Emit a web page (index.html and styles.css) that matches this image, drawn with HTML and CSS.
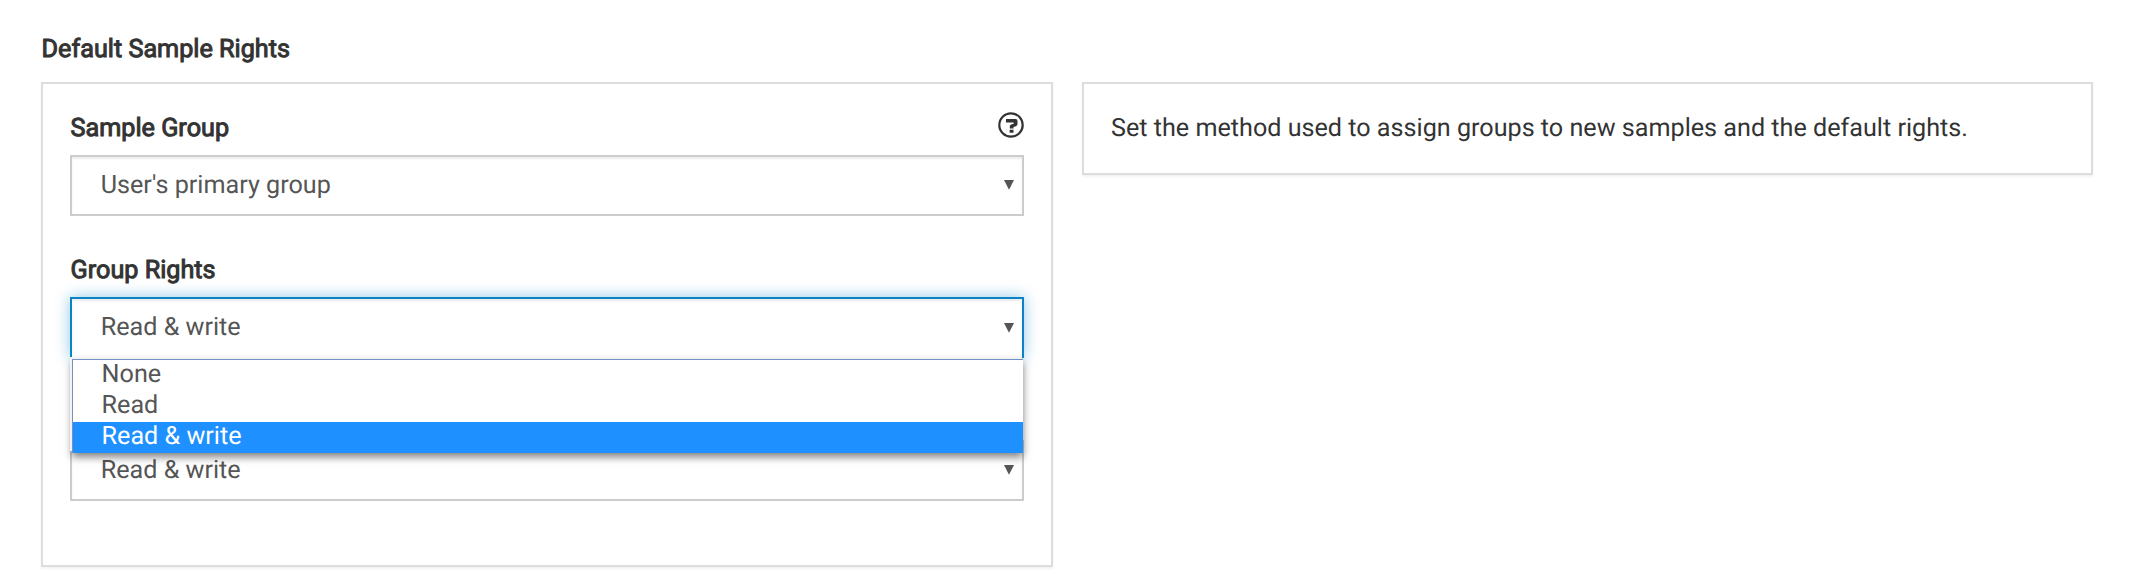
FILE: index.html
```html
<!DOCTYPE html>
<html lang="en">
<head>
<meta charset="utf-8">
<title>Default Sample Rights</title>
<link rel="stylesheet" href="styles.css">
</head>
<body>
<h2 class="title">Default Sample Rights</h2>
<main class="columns">
  <section class="panel form">
    <div class="field">
      <div class="label-row">
        <span class="label">Sample Group</span>
        <svg class="help" viewBox="0 0 26 26" aria-label="Help"><circle cx="13" cy="13" r="11.7" fill="none" stroke="#333" stroke-width="2.2"/><path d="M8 7h9.5q2 0 2 2v3q0 1.6-1.5 2.2l-2.5.9v1.5h-3.7v-2.3q0-1.2 1.3-1.7l2.6-.9v-1.2H8zM11.6 17.8h3.9v3h-3.9z" fill="#333"/></svg>
      </div>
      <div class="select"><span>User's primary group</span><svg class="arrow" viewBox="0 0 10 10"><path d="M0 0h10L5 9.8z"/></svg></div>
    </div>
    <div class="field">
      <div class="label-row"><span class="label">Group Rights</span></div>
      <div class="select focused"><span>Read &amp; write</span><svg class="arrow" viewBox="0 0 10 10"><path d="M0 0h10L5 9.8z"/></svg>
        <div class="menu">
          <div class="option">None</div>
          <div class="option">Read</div>
          <div class="option selected">Read &amp; write</div>
        </div>
      </div>
    </div>
    <div class="field last">
      <div class="select"><span>Read &amp; write</span><svg class="arrow" viewBox="0 0 10 10"><path d="M0 0h10L5 9.8z"/></svg></div>
    </div>
  </section>
  <aside class="panel note">Set the method used to assign groups to new samples and the default rights.</aside>
</main>
</body>
</html>
```
FILE: styles.css
```css
* { box-sizing: border-box; }
body {
  margin: 0;
  height: 585px;
  padding: 34px 38px 0 41px;
  overflow: hidden;
  background: #fff;
  color: #333;
  font: 400 25.17px/32px Roboto, sans-serif;
  text-rendering: geometricPrecision;
}
.title, .label {
  margin: 0;
  padding-left: 0.6px;
  font-size: 25.2px;
  font-weight: 400;
  -webkit-text-stroke: 1px #333;
}
.title { height: 48px; }
.columns {
  display: grid;
  grid-template-columns: 1012px 1011px;
  column-gap: 29px;
  align-items: start;
}
.panel {
  border: 2px solid #ddd;
  background: #fff;
  box-shadow: 0 2px 2px rgba(0, 0, 0, .05);
}
.form { height: 485px; padding: 28px 27px 0; }
.field { height: 142px; }
.last { padding-top: 44px; }
.label-row {
  display: flex;
  justify-content: space-between;
  height: 43px;
}
.label { padding-top: 1px; }
.help { width: 26px; height: 26px; }
.select {
  position: relative;
  display: flex;
  justify-content: space-between;
  height: 61px;
  padding: 13px 8px 0 28.7px;
  border: 2px solid #ccc;
  background: #fff;
  color: #555;
  box-shadow: inset 0 2px 2px rgba(0, 0, 0, .075);
}
.arrow { width: 10px; height: 10px; margin-top: 10px; fill: #555; }
.focused .arrow { margin-top: 11px; }
.focused {
  border-color: #0a84c6;
  border-bottom: 0;
  box-shadow: inset 0 2px 2px rgba(0, 0, 0, .075), 0 0 14px rgba(10, 132, 198, .45);
}
.menu {
  position: absolute;
  z-index: 2;
  top: 60px;
  left: 0;
  width: 951px;
  border: solid #7590c4;
  border-width: 1px 0 0 1px;
  background: #fff;
  box-shadow: -2px -2px 0 #f2f2f2, 0 4px 8px rgba(0, 0, 0, .5);
}
.option { height: 31px; padding-left: 28.6px; line-height: 29px; }
.selected { background: #1e90ff; color: #fff; }
.note { height: 93px; padding: 29px 27px; }
```
